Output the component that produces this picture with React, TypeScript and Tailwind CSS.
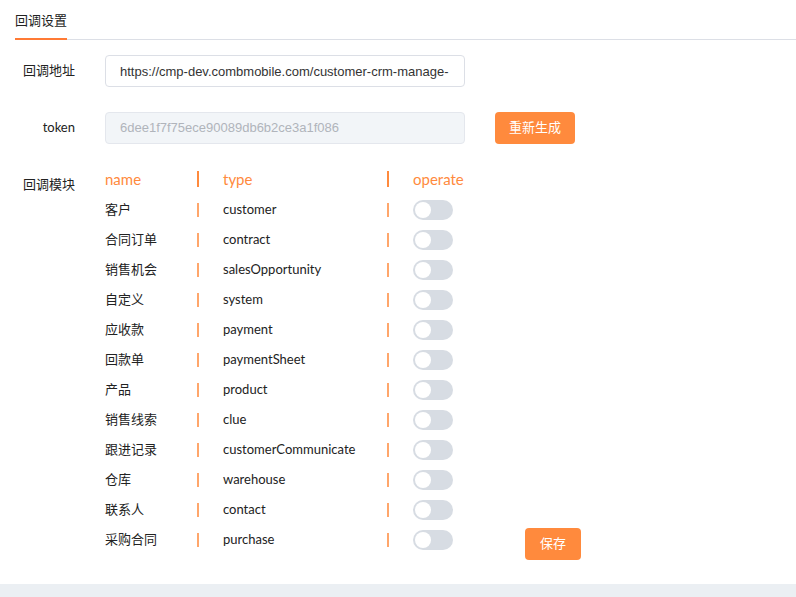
import React, { useState } from "react";

const rows = [
  { name: "客户", type: "customer" },
  { name: "合同订单", type: "contract" },
  { name: "销售机会", type: "salesOpportunity" },
  { name: "自定义", type: "system" },
  { name: "应收款", type: "payment" },
  { name: "回款单", type: "paymentSheet" },
  { name: "产品", type: "product" },
  { name: "销售线索", type: "clue" },
  { name: "跟进记录", type: "customerCommunicate" },
  { name: "仓库", type: "warehouse" },
  { name: "联系人", type: "contact" },
  { name: "采购合同", type: "purchase" },
];

const Toggle = ({ on, onClick }: { on: boolean; onClick: () => void }) => (
  <button
    onClick={onClick}
    className={`relative block w-10 h-5 rounded-full ${on ? "bg-[#ff8a3d]" : "bg-[#d7dce3]"}`}
  >
    <span
      className={`absolute top-[2px] w-4 h-4 rounded-full bg-white ${on ? "left-[22px]" : "left-[2px]"}`}
    />
  </button>
);

const App = () => {
  const [enabled, setEnabled] = useState<boolean[]>(rows.map(() => false));

  return (
    <div className="w-[796px] h-[597px] bg-white flex flex-col text-[13px] text-[#222] font-['Lato','Noto_Sans_CJK_SC',sans-serif]">
      <div className="flex-1 pl-[15px]">
        {/* tabs */}
        <div className="flex border-b border-[#dcdfe6] h-10">
          <div className="h-10 leading-[40px] border-b-2 border-[#ff7a35] w-[52px] text-[13px]">
            回调设置
          </div>
        </div>

        <div className="mt-[15px] flex items-center h-8">
          <div className="w-[60px] text-right">回调地址</div>
          <input
            className="ml-[30px] w-[360px] h-8 border border-[#dcdfe6] rounded px-[14px] text-[13px] outline-none font-['Liberation_Sans',sans-serif] text-[#333]"
            defaultValue="https://cmp-dev.combmobile.com/customer-crm-manage-"
          />
        </div>

        <div className="mt-[25px] flex items-center h-8">
          <div className="w-[60px] text-right">token</div>
          <div className="ml-[30px] w-[360px] h-8 border border-[#e4e7ed] bg-[#f2f5f8] rounded px-[14px] leading-[30px] text-[#b0b4bb] font-['Liberation_Sans',sans-serif]">
            6dee1f7f75ece90089db6b2ce3a1f086
          </div>
          <button className="ml-[30px] w-20 h-8 rounded bg-[#ff8a3d] text-white text-[13px]">
            重新生成
          </button>
        </div>

        <div className="mt-[27px] flex">
          <div className="w-[60px] text-right leading-[30px] -mt-[2px]">回调模块</div>
          <div className="ml-[30px] flex flex-col">
            <div className="flex items-center h-[30px] text-[15px] text-[#ff8a3d] -mt-[7px] mb-[1px]">
              <span className="w-[92px]">name</span>
              <span className="w-[2px] h-4 bg-[#ff8a3d]" />
              <span className="ml-6 w-[164px]">type</span>
              <span className="w-[2px] h-4 bg-[#ff8a3d]" />
              <span className="ml-6">operate</span>
            </div>
            {rows.map((r, i) => (
              <div key={r.type} className="flex items-center h-[30px]">
                <span className="w-[92px]">{r.name}</span>
                <span className="w-[2px] h-[14px] bg-[#ffa66b]" />
                <span className="ml-6 w-[164px]">{r.type}</span>
                <span className="w-[2px] h-[14px] bg-[#ffa66b]" />
                <span className="ml-6 flex items-center">
                  <Toggle
                    on={enabled[i]}
                    onClick={() => setEnabled(enabled.map((v, j) => (j === i ? !v : v)))}
                  />
                </span>
                {i === rows.length - 1 && (
                  <button className="ml-[72px] mt-2 w-14 h-8 rounded bg-[#ff8a3d] text-white text-[13px]">
                    保存
                  </button>
                )}
              </div>
            ))}
          </div>
        </div>
      </div>
      <div className="h-[13px] bg-[#ebeff3]" />
    </div>
  );
};

export default App;
